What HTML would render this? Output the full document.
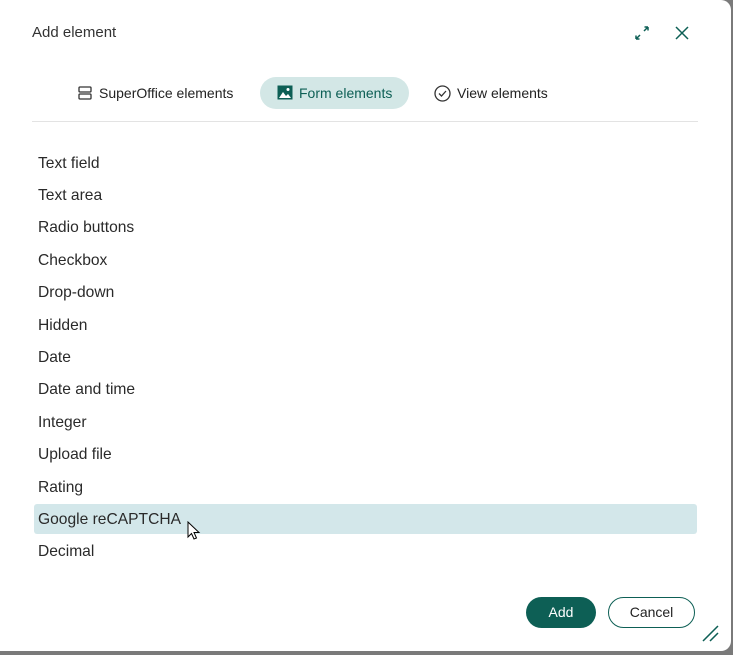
<!DOCTYPE html>
<html><head><style>
body{margin:0;width:733px;height:655px;background:#7a7a7a;font-family:"Liberation Sans",sans-serif;overflow:hidden;position:relative}
.dlg{position:absolute;left:0;top:0;width:731px;height:651px;background:#fff;border-radius:0 10px 10px 0;}
.title{position:absolute;left:32px;top:24px;font-size:15px;color:#333}
.tab{position:absolute;top:77px;height:32px;line-height:32px;font-size:14px;color:#222;white-space:nowrap}
.line{position:absolute;left:32px;top:121px;width:666px;height:1px;background:#e3e3e3}
.item{position:absolute;left:38px;font-size:15.6px;color:#2a2a2a}
.hl{position:absolute;left:34px;top:504px;width:663px;height:30px;background:#d3e7ea;border-radius:3px}
.btn{position:absolute;top:597px;height:31px;border-radius:16px;font-size:14px;line-height:31px;text-align:center}
</style></head><body>
<div class="dlg">
<div class="title">Add element</div>
<svg style="position:absolute;left:634px;top:25px" width="16" height="16" viewBox="0 0 16 16" fill="none" stroke="#0d5f55" stroke-width="1.5"><path d="M2 14L6 10M2 14h3.5M2 14v-3.5M14 2L10 6M14 2h-3.5M14 2v3.5"/></svg>
<svg style="position:absolute;left:675px;top:26px" width="14" height="14" viewBox="0 0 14 14" stroke="#0d5f55" stroke-width="1.5"><path d="M1 1L13 13M13 1L1 13"/></svg>
<svg style="position:absolute;left:78px;top:86px" width="14" height="14" viewBox="0 0 14 14" fill="none" stroke="#333" stroke-width="1.3"><rect x="1" y="1" width="12" height="5" rx="1"/><rect x="1" y="8" width="12" height="5" rx="1"/></svg>
<div class="tab" style="left:99px">SuperOffice elements</div>
<div style="position:absolute;left:260px;top:77px;width:149px;height:32px;border-radius:16px;background:#d3e7e6"></div>
<svg style="position:absolute;left:277px;top:85px" width="16" height="15" viewBox="0 0 16 15"><rect x="0.5" y="0.5" width="15" height="14" fill="#0d5f55"/><path d="M2 13L6 7L9 11L11 9L14 13Z" fill="#fff"/><circle cx="11" cy="4.5" r="1.5" fill="#fff"/></svg>
<div class="tab" style="left:299px;color:#0d5f55">Form elements</div>
<svg style="position:absolute;left:434px;top:85px" width="17" height="17" viewBox="0 0 17 17" fill="none" stroke="#333" stroke-width="1.3"><circle cx="8.5" cy="8.5" r="7.5"/><path d="M5 8.5L7.5 11L12 6"/></svg>
<div class="tab" style="left:457px">View elements</div>
<div class="line"></div>
<div class="hl"></div>
<div class="item" style="top:155px">Text field</div>
<div class="item" style="top:187px">Text area</div>
<div class="item" style="top:219px">Radio buttons</div>
<div class="item" style="top:252px">Checkbox</div>
<div class="item" style="top:284px">Drop-down</div>
<div class="item" style="top:317px">Hidden</div>
<div class="item" style="top:349px">Date</div>
<div class="item" style="top:381px">Date and time</div>
<div class="item" style="top:414px">Integer</div>
<div class="item" style="top:446px">Upload file</div>
<div class="item" style="top:479px">Rating</div>
<div class="item" style="top:511px">Google reCAPTCHA</div>
<div class="item" style="top:543px">Decimal</div>
<svg style="position:absolute;left:187px;top:521px" width="14" height="20" viewBox="0 0 14 20"><path d="M1 1L1 16L4.5 12.5L7 18L9.5 17L7 11.5L12 11.5Z" fill="#fff" stroke="#000" stroke-width="1"/></svg>
<div class="btn" style="left:526px;width:70px;background:#0d5f55;color:#fff">Add</div>
<div class="btn" style="left:608px;width:85px;border:1px solid #0d5f55;height:29px;line-height:29px;color:#222">Cancel</div>
<svg style="position:absolute;left:702px;top:625px" width="18" height="18" viewBox="0 0 18 18" stroke="#0d5f55" stroke-width="1.5"><path d="M1 16L16 1M8 16L16 8"/></svg>
</div>
</body></html>
